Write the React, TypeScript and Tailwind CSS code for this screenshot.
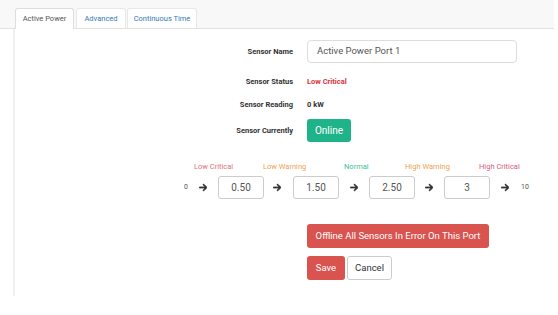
import React from "react";

const Arrow = () => (
  <svg viewBox="0 0 448 512" className="w-[8px] h-[9px] fill-[#333] stroke-[#333] block" strokeWidth={40}>
    <path d="M438.6 278.6c12.5-12.5 12.5-32.8 0-45.3l-160-160c-12.5-12.5-32.8-12.5-45.3 0s-12.5 32.8 0 45.3L338.8 224 32 224c-17.7 0-32 14.3-32 32s14.3 32 32 32l306.7 0L233.4 393.4c-12.5 12.5-12.5 32.8 0 45.3s32.8 12.5 45.3 0l160-160z" />
  </svg>
);

const NumBox = ({ v }: { v: string }) => (
  <div className="w-[46px] h-[23px] border border-[#ccc] rounded-[3px] flex items-center justify-center text-[10px] text-[#555]">
    {v}
  </div>
);

export default function App() {
  return (
    <div className="w-[558px] h-[315px] bg-white relative overflow-hidden" style={{ fontFamily: "Roboto, 'Liberation Sans', sans-serif" }}>
      <div className="w-[554px] h-[29px] bg-[#f8f8f8] flex items-end pl-[15px] border-b border-[#e2e2e2]">
        <div className="h-[21px] w-[59px] bg-white border border-b-0 border-[#ddd] rounded-t-[3px] flex items-center justify-center text-[7.5px] text-[#555] -mb-px">
          Active Power
        </div>
        <div className="h-[20px] w-[50px] ml-[2px] bg-white border border-b-0 border-[#e8e8e8] rounded-t-[3px] flex items-center justify-center text-[7.5px] text-[#337ab7]">
          Advanced
        </div>
        <div className="h-[20px] w-[70px] ml-[1px] bg-white border border-b-0 border-[#e8e8e8] rounded-t-[3px] flex items-center justify-center text-[7.5px] text-[#337ab7]">
          Continuous Time
        </div>
      </div>
      <div className="ml-[13px] w-[545px] h-[267px] border-l-2 border-[#f0f0f0]">
        <div className="flex items-center pt-[11px]">
          <div className="w-[278px] text-right text-[7.5px] font-bold text-[#333]">Sensor Name</div>
          <div className="ml-[14px] w-[210px] h-[23px] border border-[#ddd] rounded-[4px] flex items-center pl-[9px] text-[9.5px] text-[#555]">
            Active Power Port 1
          </div>
        </div>
        <div className="flex items-center mt-[13px] h-[12px]">
          <div className="w-[278px] text-right text-[7.5px] font-bold text-[#333]">Sensor Status</div>
          <div className="ml-[14px] text-[7.5px] font-bold text-[#d9363e]">Low Critical</div>
        </div>
        <div className="flex items-center mt-[11px] h-[12px]">
          <div className="w-[278px] text-right text-[7.5px] font-bold text-[#333]">Sensor Reading</div>
          <div className="ml-[14px] text-[7.5px] font-bold text-[#333]">0 kW</div>
        </div>
        <div className="flex items-center mt-[8px]">
          <div className="w-[278px] text-right text-[7.5px] font-bold text-[#333]">Sensor Currently</div>
          <div className="ml-[14px] w-[44px] h-[23px] bg-[#1fb38a] rounded-[3px] flex items-center justify-center text-[10px] text-white">
            Online
          </div>
        </div>
        <div className="relative h-[12px] mt-[19px] text-[7.5px]">
          <span className="absolute left-[179px] text-[#e0707a]">Low Critical</span>
          <span className="absolute left-[248px] text-[#f0a050]">Low Warning</span>
          <span className="absolute left-[329px] text-[#3cbf96]">Normal</span>
          <span className="absolute left-[390px] text-[#f0a050]">High Warning</span>
          <span className="absolute left-[464px] text-[#d45a78]">High Critical</span>
        </div>
        <div className="flex items-center mt-[3px] pl-[169px]">
          <span className="text-[7px] text-[#555] w-[4px] inline-block">0</span>
          <div className="ml-[11px]"><Arrow /></div>
          <div className="ml-[11px]"><NumBox v="0.50" /></div>
          <div className="ml-[9px]"><Arrow /></div>
          <div className="ml-[12px]"><NumBox v="1.50" /></div>
          <div className="ml-[11px]"><Arrow /></div>
          <div className="ml-[11px]"><NumBox v="2.50" /></div>
          <div className="ml-[10px]"><Arrow /></div>
          <div className="ml-[11px]"><NumBox v="3" /></div>
          <div className="ml-[11px]"><Arrow /></div>
          <span className="ml-[12px] text-[7px] text-[#555]">10</span>
        </div>
        <div className="pl-[292px] mt-[25px]">
          <div className="w-[182px] h-[24px] bg-[#d9534f] rounded-[3px] flex items-center justify-center text-[9.5px] text-white">
            Offline All Sensors In Error On This Port
          </div>
          <div className="flex mt-[8px]">
            <div className="w-[38px] h-[24px] bg-[#d9534f] rounded-[3px] flex items-center justify-center text-[9.5px] text-white">
              Save
            </div>
            <div className="ml-[2px] w-[45px] h-[24px] bg-white border border-[#ccc] rounded-[3px] flex items-center justify-center text-[9.5px] text-[#333]">
              Cancel
            </div>
          </div>
        </div>
      </div>
    </div>
  );
}
